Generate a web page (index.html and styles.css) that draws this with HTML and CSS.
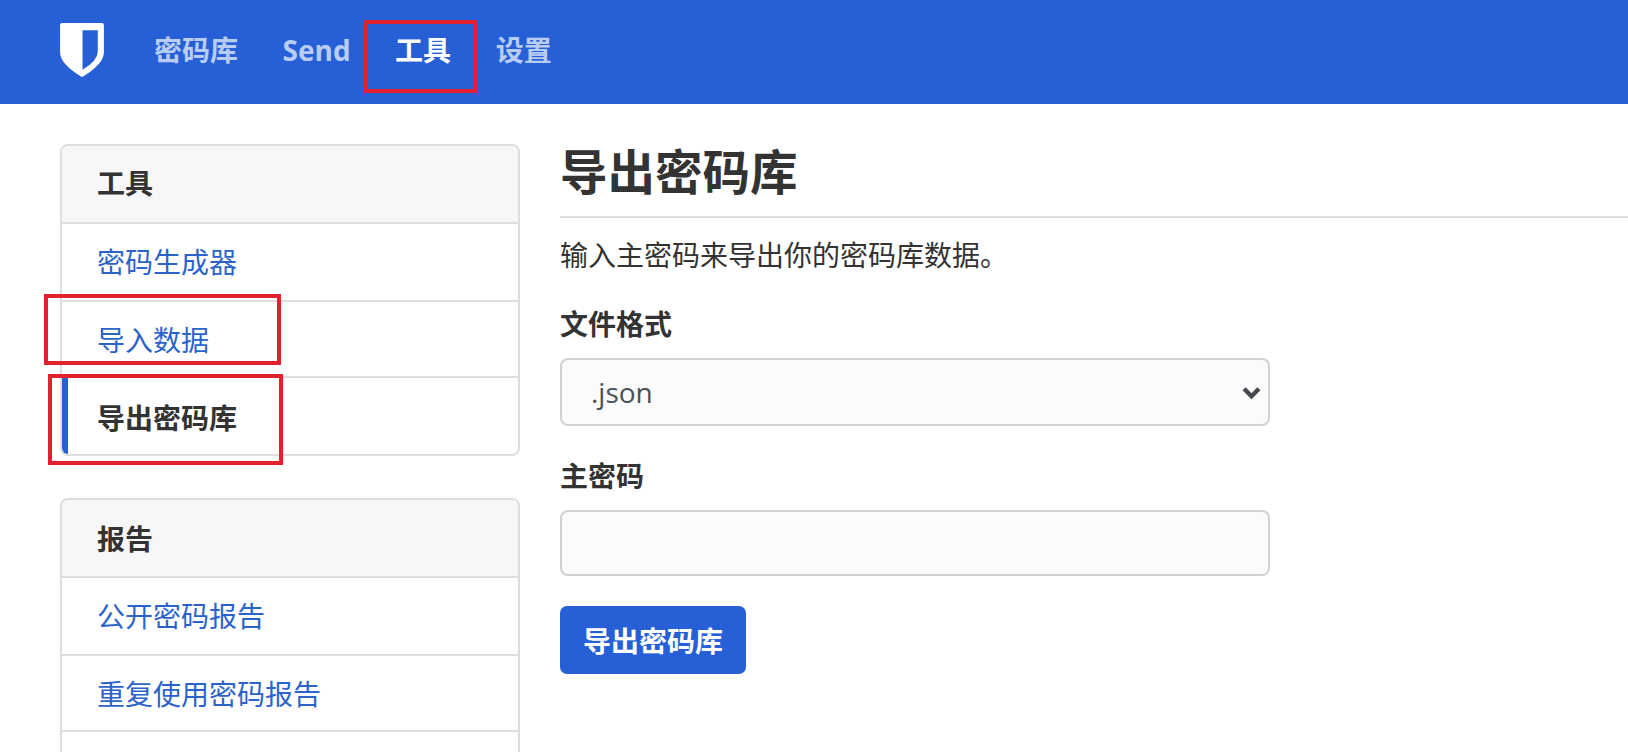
FILE: index.html
```html
<!DOCTYPE html>
<html lang="zh-CN">
<head>
  <meta charset="UTF-8">
  <title>导出密码库</title>
  <link rel="stylesheet" href="styles.css">
</head>
<body>

<nav class="topbar">
  <svg class="logo" viewBox="0 0 43 53" aria-hidden="true">
    <path fill="#fff" fill-rule="evenodd" d="M2 0H41Q43 0 43 2V29Q43 40 22.5 52.6Q21.5 53 20.5 52.6Q0 40 0 29V2Q0 0 2 0ZM22 7V46Q37 37 37 28V7Z"/>
  </svg>
  <a class="topbar-link" href="#">密码库</a>
  <a class="topbar-link" href="#">Send</a>
  <a class="topbar-link activo" href="#">工具</a>
  <a class="topbar-link" href="#">设置</a>
</nav>

<div class="pagina">
  <aside class="lateral">
    <section class="tarjeta">
      <h3 class="tarjeta-titulo">工具</h3>
      <a class="fila" href="#">密码生成器</a>
      <a class="fila" href="#">导入数据</a>
      <a class="fila seleccionada" href="#">导出密码库</a>
    </section>

    <section class="tarjeta">
      <h3 class="tarjeta-titulo">报告</h3>
      <a class="fila" href="#">公开密码报告</a>
      <a class="fila" href="#">重复使用密码报告</a>
      <div class="fila"></div>
    </section>
  </aside>

  <main class="contenido">
    <h1 class="titulo">导出密码库</h1>
    <p class="intro">输入主密码来导出你的密码库数据。</p>

    <label class="etiqueta" for="formato">文件格式</label>
    <select class="campo selector" id="formato">
      <option>.json</option>
      <option>.csv</option>
    </select>

    <label class="etiqueta" for="clave">主密码</label>
    <input class="campo clave" id="clave" type="password">

    <button class="boton" type="button">导出密码库</button>
  </main>
</div>

<div class="marca marca-nav"></div>
<div class="marca marca-importar"></div>
<div class="marca marca-exportar"></div>

</body>
</html>
```

FILE: styles.css
```css
html, body {
  height: 100%;
}

body {
  margin: 0;
  overflow: hidden;
  position: relative;
  font-family: "Open Sans", "Noto Sans CJK SC", sans-serif;
  font-size: 28px;
  color: #333333;
  background-color: #ffffff;
}

.topbar {
  display: flex;
  align-items: center;
  gap: 44.5px;
  height: 104px;
  padding: 0 0 4px 60px;
  box-sizing: border-box;
  background-color: #2760d6;
}

.logo {
  width: 44px;
  height: 54px;
  margin-right: 5.5px;
}

.topbar-link {
  font-weight: 700;
  line-height: 40px;
  text-decoration: none;
  color: #b9cdf3;
}

.topbar-link.activo {
  color: #ffffff;
}

.pagina {
  display: flex;
  gap: 40px;
  padding: 40px 0 0 60px;
}

.lateral {
  flex: 0 0 460px;
}

.tarjeta {
  margin-bottom: 42px;
  border: 2px solid #dedede;
  border-radius: 8px;
  overflow: hidden;
}

.tarjeta-titulo {
  margin: 0;
  padding: 0 35px;
  height: 76px;
  line-height: 75px;
  font-size: 28px;
  font-weight: 600;
  box-sizing: border-box;
  background-color: #f7f7f7;
}

.tarjeta + .tarjeta .tarjeta-titulo {
  line-height: 79px;
}

.fila {
  display: block;
  height: 78px;
  padding-left: 35px;
  line-height: 76px;
  border-top: 2px solid #dedede;
  box-sizing: border-box;
  text-decoration: none;
  color: #2c63cb;
}

.fila:nth-child(3) {
  height: 76px;
}

.fila.seleccionada {
  padding-left: 29px;
  line-height: 80px;
  border-left: 6px solid #2760d6;
  font-weight: 600;
  color: #333333;
}

.contenido {
  flex: 1;
  min-width: 0;
}

.titulo {
  margin: 0 0 15px;
  height: 72px;
  line-height: 56px;
  font-size: 47.5px;
  font-weight: 600;
  border-bottom: 2px solid #dedede;
}

.intro {
  margin: 0 0 27px;
  line-height: 44px;
}

.etiqueta {
  display: block;
  margin-bottom: 14px;
  line-height: 40px;
  font-weight: 600;
}

.campo {
  display: block;
  width: 710px;
  height: 68px;
  margin-bottom: 30px;
  padding: 0 29px;
  box-sizing: border-box;
  font-family: inherit;
  font-size: 28px;
  color: #495057;
  background-color: #fbfbfb;
  border: 2px solid #cfd2d6;
  border-radius: 8px;
}

.clave {
  height: 66px;
}

.selector {
  appearance: none;
  background-image: url("data:image/svg+xml,%3Csvg xmlns='http://www.w3.org/2000/svg' viewBox='0 0 18 12'%3E%3Cpath d='M2 2.5l7 7 7-7' fill='none' stroke='%23454a50' stroke-width='4.2'/%3E%3C/svg%3E");
  background-repeat: no-repeat;
  background-position: right 7px center;
  background-size: 19px 13px;
}

.boton {
  display: block;
  width: 186px;
  height: 68px;
  margin-top: 22px;
  padding: 0;
  font-family: inherit;
  font-size: 28px;
  font-weight: 600;
  color: #ffffff;
  background-color: #2760d6;
  border: none;
  border-radius: 7px;
}

/* recuadros rojos de la captura */
.marca {
  position: absolute;
  border: 4px solid #e1212e;
  box-sizing: border-box;
}

.marca-nav {
  left: 364px;
  top: 20px;
  width: 113px;
  height: 73px;
}

.marca-importar {
  left: 44px;
  top: 294px;
  width: 237px;
  height: 71px;
}

.marca-exportar {
  left: 48px;
  top: 374px;
  width: 235px;
  height: 91px;
}
```
